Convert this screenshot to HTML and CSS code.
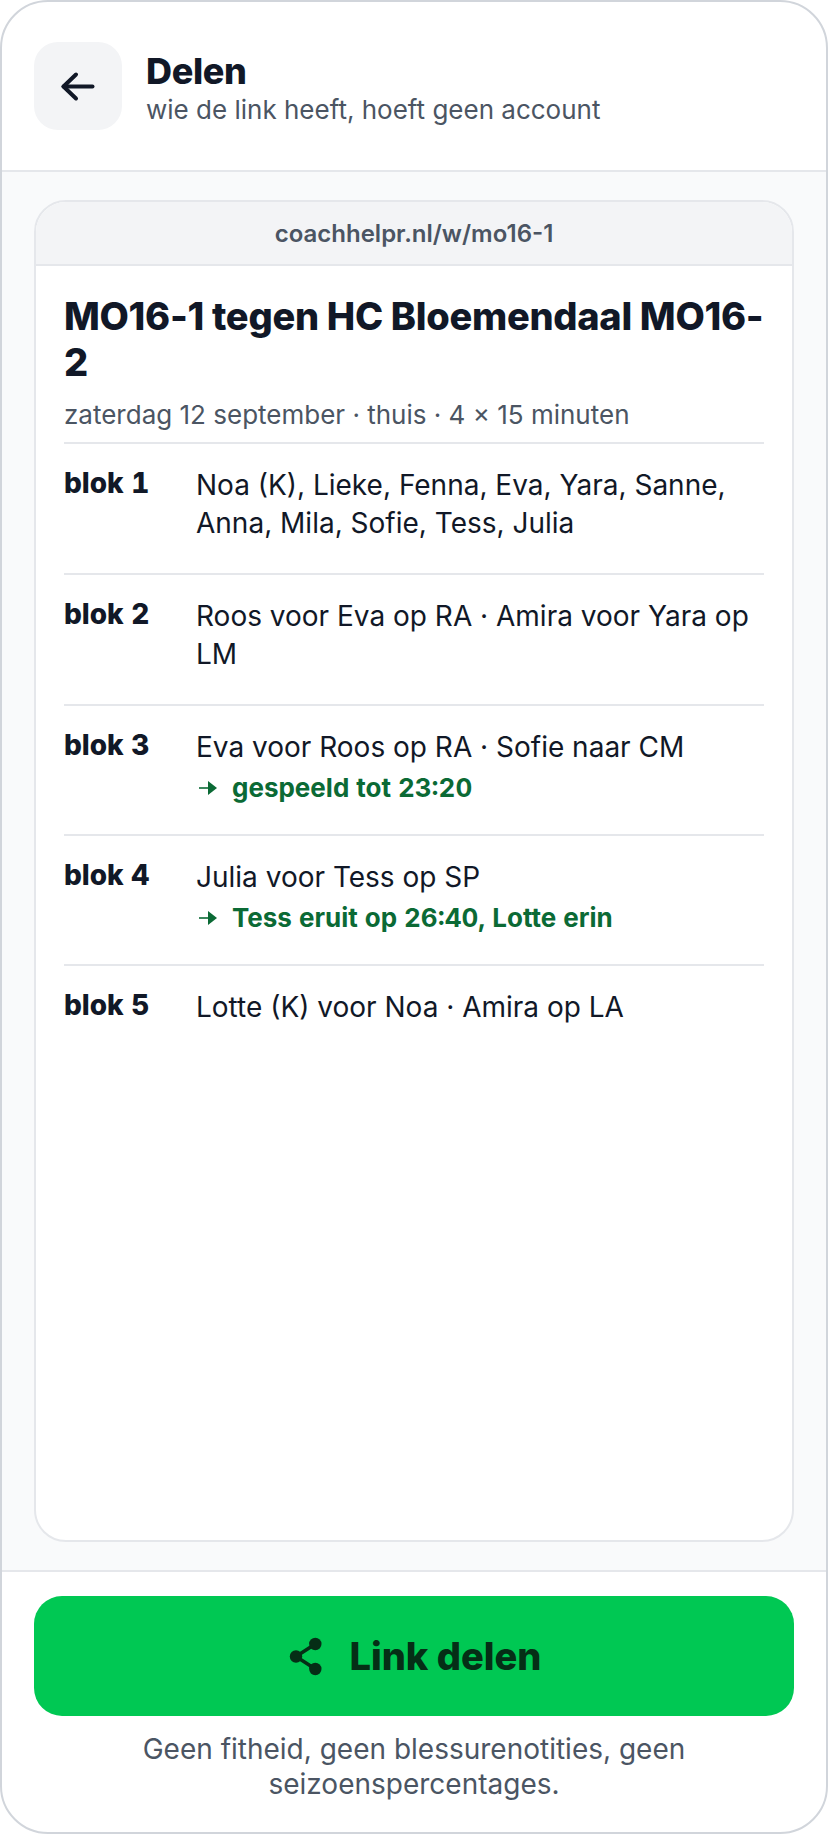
FILE: index.html
```html
<!DOCTYPE html>
<html lang="nl">
  <head>
    <meta charset="UTF-8" />
    <title>Delen</title>
    <link rel="stylesheet" href="styles.css">
  </head>
  <body>
    <div class="phone">
      <header class="topbar">
        <button class="back-btn" aria-label="Terug">
          <svg width="44" height="44" viewBox="0 0 44 44" fill="none" stroke="#111827" stroke-width="4" stroke-linecap="round" stroke-linejoin="round">
            <path d="M36.5 22.5H7.5" />
            <path d="M20 10.5 7.5 22.5 20 34.5" />
          </svg>
        </button>
        <div class="topbar-text">
          <h1>Delen</h1>
          <p class="subtitle">wie de link heeft, hoeft geen account</p>
        </div>
      </header>

      <main class="content">
        <section class="card">
          <div class="url-bar">coachhelpr.nl/w/mo16-1</div>
          <div class="card-body">
            <h2>MO16-1 tegen HC Bloemendaal MO16-2</h2>
            <p class="meta">zaterdag 12 september · thuis · 4 × 15 minuten</p>

            <div class="block">
              <div class="block-name">blok 1</div>
              <div class="block-text">Noa (K), Lieke, Fenna, Eva, Yara, Sanne, Anna, Mila, Sofie, Tess, Julia</div>
            </div>
            <div class="block">
              <div class="block-name">blok 2</div>
              <div class="block-text">Roos voor Eva op RA · Amira voor Yara op LM</div>
            </div>
            <div class="block">
              <div class="block-name">blok 3</div>
              <div class="block-text">
                Eva voor Roos op RA · Sofie naar CM
                <div class="played">
                  <svg class="played-arrow" width="18" height="14" viewBox="0 0 18 14" fill="#0b6a35">
                    <path d="M0 6.2h10v1.6H0z" />
                    <path d="M9 0l9 7-9 7z" />
                  </svg>
                  gespeeld tot 23:20
                </div>
              </div>
            </div>
            <div class="block">
              <div class="block-name">blok 4</div>
              <div class="block-text">
                Julia voor Tess op SP
                <div class="played">
                  <svg class="played-arrow" width="18" height="14" viewBox="0 0 18 14" fill="#0b6a35">
                    <path d="M0 6.2h10v1.6H0z" />
                    <path d="M9 0l9 7-9 7z" />
                  </svg>
                  Tess eruit op 26:40, Lotte erin
                </div>
              </div>
            </div>
            <div class="block">
              <div class="block-name">blok 5</div>
              <div class="block-text">Lotte (K) voor Noa · Amira op LA</div>
            </div>
          </div>
        </section>
      </main>

      <footer class="bottom">
        <button class="share-btn">
          <svg width="40" height="40" viewBox="0 0 40 40" fill="#052e16" stroke="#052e16">
            <path d="M10 20.5 29.3 8M10 20.5 29.3 33" stroke-width="3.5" fill="none" />
            <circle cx="10" cy="20.5" r="6.2" stroke="none" />
            <circle cx="29.3" cy="8" r="6.2" stroke="none" />
            <circle cx="29.3" cy="33" r="6.2" stroke="none" />
          </svg>
          Link delen
        </button>
        <p class="note">Geen fitheid, geen blessurenotities, geen seizoenspercentages.</p>
      </footer>
    </div>
  </body>
</html>
```

FILE: styles.css
```css
* {
  box-sizing: border-box;
}

html,
body {
  height: 100%;
}

body {
  margin: 0;
  background: #ffffff;
  font-family: Inter, sans-serif;
  color: #111827;
}

.phone {
  height: 1834px;
  display: flex;
  flex-direction: column;
  background: #ffffff;
  border: 2px solid #d1d5db;
  border-radius: 48px;
  overflow: hidden;
}

.topbar {
  height: 170px;
  flex-shrink: 0;
  display: flex;
  align-items: center;
  gap: 24px;
  padding: 0 32px;
  border-bottom: 2px solid #e5e7eb;
}

.topbar-text {
  padding-top: 5px;
}

.back-btn {
  width: 88px;
  height: 88px;
  display: flex;
  align-items: center;
  justify-content: center;
  padding: 0;
  background: #f3f4f6;
  border: none;
  border-radius: 24px;
}

h1 {
  margin: 0 0 2px;
  font-size: 36px;
  line-height: 40px;
  font-weight: 800;
  letter-spacing: -0.36px;
}

.subtitle {
  margin: 0;
  font-size: 26px;
  line-height: 34px;
  color: #4b5563;
}

.content {
  flex: 1;
  display: flex;
  padding: 28px 32px;
  background: #f9fafb;
}

.card {
  flex: 1;
  background: #ffffff;
  border: 2px solid #e5e7eb;
  border-radius: 32px;
  overflow: hidden;
}

.url-bar {
  height: 64px;
  display: flex;
  align-items: center;
  justify-content: center;
  background: #f3f4f6;
  border-bottom: 2px solid #e5e7eb;
  font-size: 24px;
  font-weight: 600;
  color: #4b5563;
}

.card-body {
  padding: 27px 28px;
}

h2 {
  margin: 0;
  font-size: 38px;
  line-height: 46px;
  font-weight: 800;
  letter-spacing: -0.3px;
}

.meta {
  margin: 13px 0 10px;
  font-size: 26px;
  line-height: 34px;
  color: #4b5563;
}

.block {
  display: flex;
  padding: 22px 0 31px;
  border-top: 2px solid #e5e7eb;
}

.block-name {
  width: 132px;
  flex-shrink: 0;
  font-size: 28px;
  line-height: 34px;
  font-weight: 800;
  font-variant-numeric: tabular-nums;
}

.block-text {
  font-size: 28px;
  line-height: 38px;
}

.played {
  display: flex;
  align-items: center;
  gap: 15px;
  margin-top: 6px;
  font-size: 26px;
  line-height: 31px;
  font-weight: 700;
  font-variant-numeric: tabular-nums;
  color: #0b6a35;
}

.played-arrow {
  flex-shrink: 0;
  margin-left: 3px;
}

.bottom {
  flex-shrink: 0;
  padding: 24px 32px 0;
  height: 262px;
  border-top: 2px solid #e5e7eb;
}

.share-btn {
  width: 100%;
  height: 120px;
  display: flex;
  align-items: center;
  justify-content: center;
  gap: 23px;
  background: #00c853;
  border: none;
  border-radius: 28px;
  font-family: inherit;
  font-size: 38px;
  font-weight: 800;
  color: #052e16;
}

.note {
  margin: 16px 0 0;
  text-align: center;
  font-size: 28px;
  line-height: 35px;
  color: #4b5563;
}
```
